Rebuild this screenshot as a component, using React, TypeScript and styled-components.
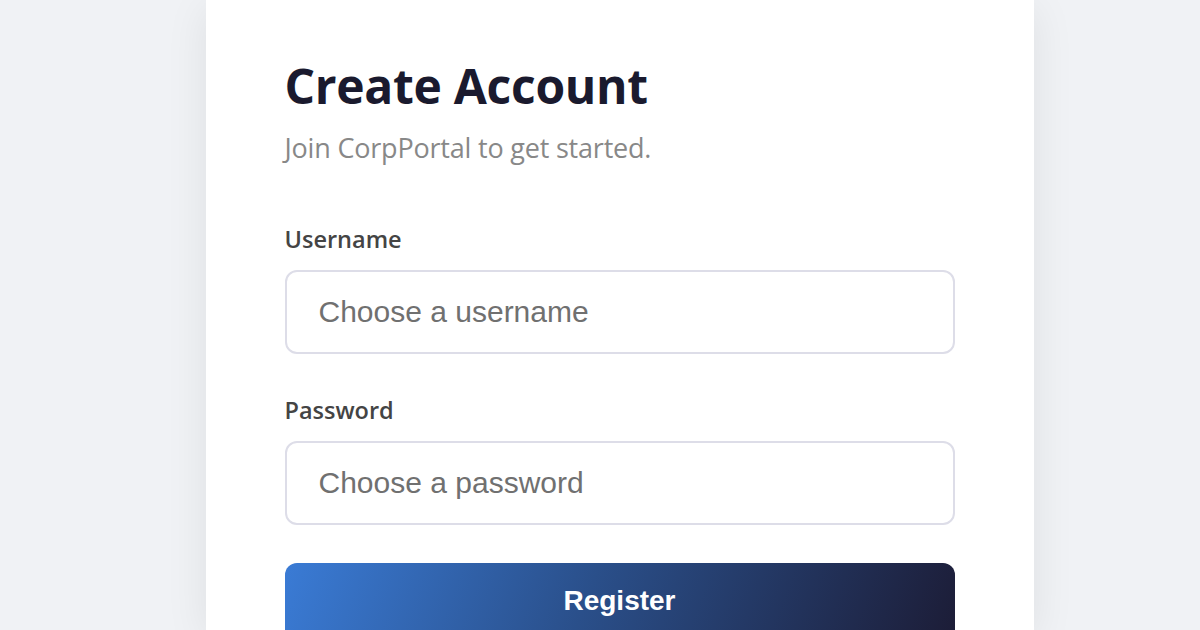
import styled, { createGlobalStyle } from "styled-components";

const GlobalStyle = createGlobalStyle`
  html, body {
    margin: 0;
    padding: 0;
    background: #f0f2f5;
    overflow: hidden;
  }
  * { box-sizing: border-box; }
`;

const Page = styled.main`
  display: flex;
  justify-content: center;
  height: 630px;
  overflow: hidden;
  padding-left: 39px;
  background: #f0f2f5;
`;

const Card = styled.section`
  width: 828px;
  background: #ffffff;
  padding: 56px 79px 40px;
  box-shadow: 0 8px 40px rgba(0, 0, 0, 0.08);
  display: flex;
  flex-direction: column;
`;

const Title = styled.h1`
  margin: 0;
  font-family: "Open Sans", "Noto Sans", sans-serif;
  font-weight: 700;
  font-size: 48px;
  line-height: 60px;
  color: #1a1a2e;
  letter-spacing: -0.3px;
`;

const Subtitle = styled.p`
  margin: 14px 0 0;
  font-family: "Open Sans", "Noto Sans", sans-serif;
  font-size: 27px;
  line-height: 36px;
  color: #888888;
  letter-spacing: -0.2px;
`;

const Form = styled.form`
  display: flex;
  flex-direction: column;
  margin-top: 58px;
`;

const Field = styled.div<{ $spacing: number }>`
  display: flex;
  flex-direction: column;
  margin-bottom: ${(p) => p.$spacing}px;
`;

const Label = styled.label`
  font-family: "Open Sans", "Noto Sans", sans-serif;
  font-weight: 600;
  font-size: 23.5px;
  line-height: 30px;
  color: #444444;
  margin-bottom: 16px;
`;

const Input = styled.input`
  height: 84px;
  width: 100%;
  border: 2px solid #dddde8;
  border-radius: 12px;
  padding: 0 32px;
  font-family: "Liberation Sans", Arial, sans-serif;
  font-size: 30px;
  color: #333;
  outline: none;
  &::placeholder {
    color: #707070;
  }
`;

const Button = styled.button`
  flex-shrink: 0;
  height: 84px;
  width: 100%;
  border: none;
  border-radius: 12px;
  background: linear-gradient(110deg, #3a7bd5 0%, #2a4f8a 45%, #1c1c36 100%);
  color: #ffffff;
  font-family: "Liberation Sans", Arial, sans-serif;
  font-weight: 700;
  font-size: 28px;
  cursor: pointer;
  padding-bottom: 10px;
`;

const App = () => {
  return (
    <>
      <GlobalStyle />
      <Page>
        <Card>
          <Title>Create Account</Title>
          <Subtitle>Join CorpPortal to get started.</Subtitle>
          <Form onSubmit={(e) => e.preventDefault()}>
            <Field $spacing={41}>
              <Label htmlFor="username">Username</Label>
              <Input id="username" placeholder="Choose a username" />
            </Field>
            <Field $spacing={38}>
              <Label htmlFor="password">Password</Label>
              <Input id="password" type="password" placeholder="Choose a password" />
            </Field>
            <Button type="submit">Register</Button>
          </Form>
        </Card>
      </Page>
    </>
  );
};

export default App;
